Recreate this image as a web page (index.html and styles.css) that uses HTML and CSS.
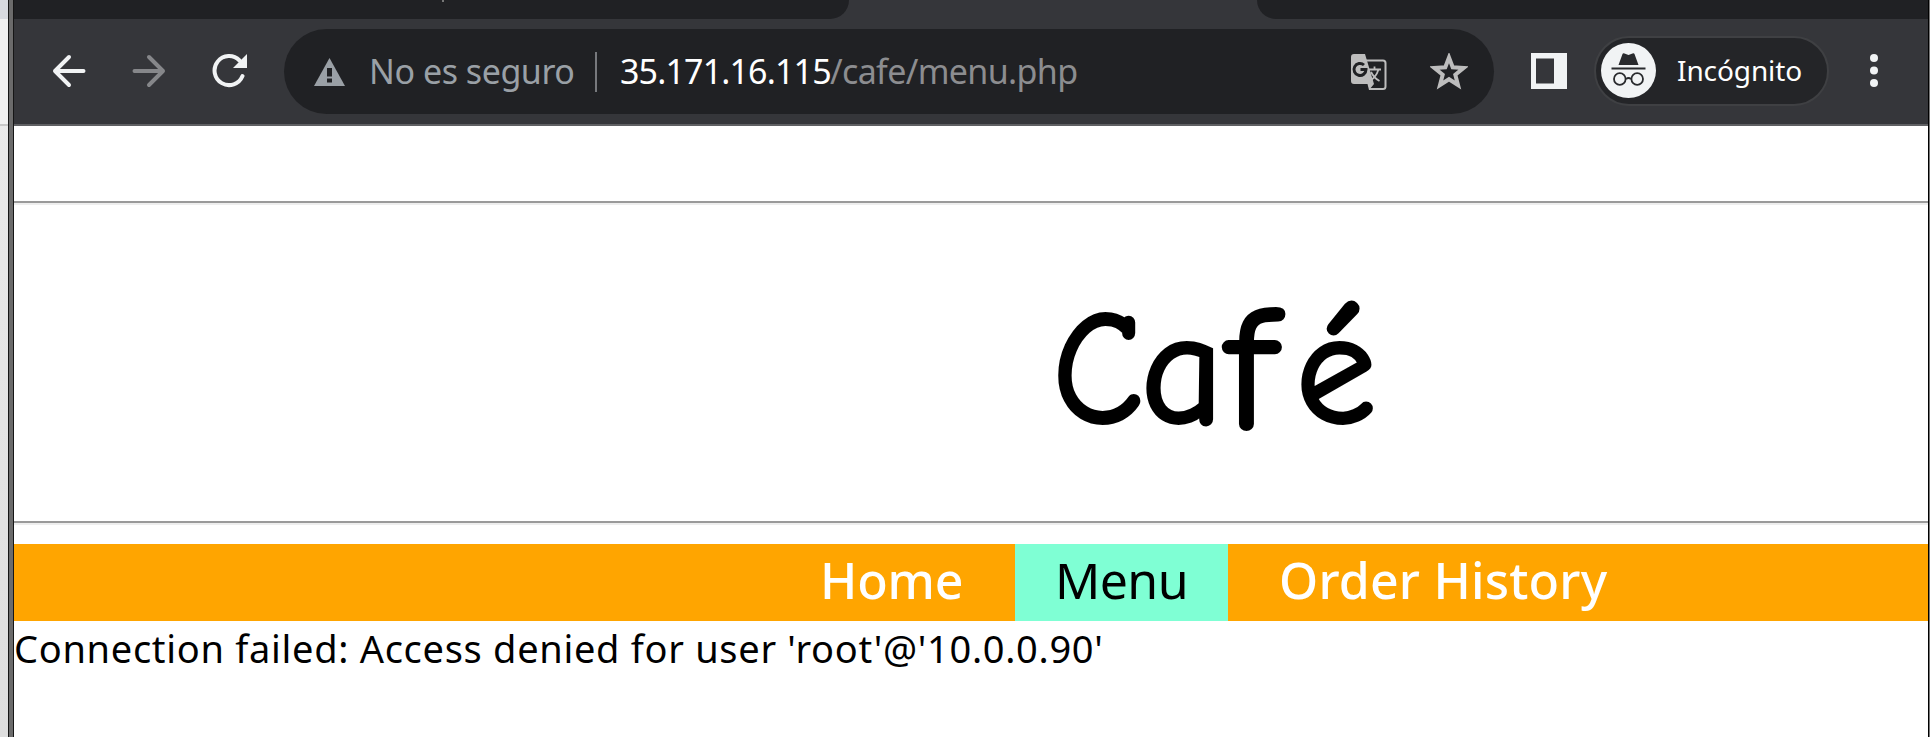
FILE: index.html
```html
<!DOCTYPE html>
<html lang="es">
<head>
<meta charset="utf-8">
<title>Café</title>
<link rel="stylesheet" href="styles.css">
</head>
<body>
<div class="screen">
  <aside class="behind"><div class="behind-top"></div><div class="behind-bar"></div></aside>
  <div class="edge"></div>
  <div class="window">
    <div class="tabs">
      <div class="tabs-left"><i class="tab-tick"></i></div>
      <div class="tabs-right"></div>
    </div>
    <header class="toolbar">
      <svg class="back" width="34" height="34" viewBox="0 0 34 34"><path d="M31.5 17H3M17 3L3 17L17 31"/></svg>
      <svg class="forward" width="34" height="34" viewBox="0 0 34 34"><path d="M2.500 17H31M17 3L31 17L17 31"/></svg>
      <svg class="reload" width="36" height="36" viewBox="0 0 36 36"><path class="arc" d="M30.500 23A14.500 14.500 0 1 1 27.500 7.500"/><path class="tip" d="M35 1V15H21Z"/></svg>
      <div class="address">
        <svg class="warn" width="31" height="28" viewBox="0 0 31 28"><path d="M15.500 0L31 28H0Z"/><path class="mark" d="M13 10h5v8.500h-5zM13 20.500h5v4h-5z"/></svg>
        <span class="insecure">No es seguro</span>
        <i class="divider"></i>
        <span class="host">35.171.16.115</span><span class="path">/cafe/menu.php</span>
        <svg class="translate" width="36" height="36" viewBox="0 0 36 36">
          <path class="outline" d="M15 6.500H32Q34.500 6.500 34.500 9V32.500Q34.500 35 32 35H18"/>
          <path class="fill" d="M3 0H14L23 30L18 36L16.500 30H3Q0 30 0 27V3Q0 0 3 0Z"/>
          <path class="g" d="M13 11A6 6 0 1 0 15 15.500H9.500"/>
          <path class="han" d="M18 15.500H30M23.500 12.500V15.500M27.500 15.500Q25 23.500 18.500 27M20 18Q23 24 28.500 27"/>
        </svg>
        <svg class="star" width="38" height="37" viewBox="0 0 38 37"><path d="M19 4.500L22.700 14.300L33.500 15L25.300 21.700L28 32L19 26.200L10 32L12.700 21.700L4.500 15L15.300 14.300Z"/></svg>
      </div>
      <svg class="panel" width="36" height="36" viewBox="0 0 36 36"><path fill-rule="evenodd" d="M0 0H36V36H0ZM5 5.500V30.500H23V5.500Z"/></svg>
      <div class="profile">
        <svg width="55" height="55" viewBox="0 0 55 55">
          <circle class="disc" cx="27.500" cy="27.500" r="27.500"/>
          <path class="hat" d="M17.500 22L21.500 11Q22 10 23.500 10.500L27.500 12L31.500 10.500Q33 10 33.500 11L37.500 22ZM10.500 24.500H44.500V26.500H10.500Z"/>
          <path class="specs" d="M25 36Q27.500 34 30 36"/><circle class="specs" cx="18.800" cy="36" r="5.800"/><circle class="specs" cx="36.200" cy="36" r="5.800"/>
        </svg>
        <span>Incógnito</span>
      </div>
      <svg class="more" width="8" height="34" viewBox="0 0 8 34"><circle cx="4" cy="4" r="4"/><circle cx="4" cy="16.500" r="4"/><circle cx="4" cy="29" r="4"/></svg>
    </header>
    <main>
      <div class="spacer"></div>
      <hr>
      <h1><span class="c">C</span><span class="a">a</span><span class="f">f</span><span class="e">é</span></h1>
      <hr>
      <nav><a class="home">Home</a><a class="current">Menu</a><a class="orders">Order History</a></nav>
      <p>Connection failed: Access denied for user 'root'@'10.0.0.90'</p>
    </main>
  </div>
  <div class="right-edge"></div>
</div>
</body>
</html>
```
FILE: styles.css
```css
* { box-sizing: border-box; }
body { margin: 0; background: #fff; font-family: "Noto Sans", "Open Sans", sans-serif; overflow: hidden; }
svg { display: block; flex: none; }
.screen { display: flex; width: 1930px; height: 737px; }
.behind { width: 8px; background: linear-gradient(#ececec, #dedede); }
.behind-top { height: 19px; background: #d8dadf; }
.behind-bar { height: 107px; background: #f1f1f1; border-bottom: 2px solid #c8c8c8; }
.edge { width: 6px; background: #6b6b6b; border: solid #161616; border-width: 0 1px; }
.window { width: 1914px; }
.right-edge { width: 2px; background: #777; border-left: 1px solid #000; }
.tabs { display: flex; justify-content: space-between; height: 19px; background: #35363a; }
.tabs-left { width: 835px; background: #202124; border-bottom-right-radius: 19px; }
.tab-tick { display: block; width: 2px; height: 2px; margin-left: 428px; background: #777; }
.tabs-right { width: 671px; background: #202124; border-bottom-left-radius: 19px; }
.toolbar { display: flex; align-items: center; height: 107px; padding: 0 50px 2px 38px; background: #35363a; border-bottom: 2px solid #5f6063; }
.back, .forward { fill: none; stroke: #f1f3f4; stroke-width: 4; stroke-linecap: round; stroke-linejoin: round; }
.forward { margin-left: 46px; stroke: #86878a; }
.reload { margin-left: 46px; }
.arc { fill: none; stroke: #f1f3f4; stroke-width: 4; stroke-linecap: round; }
.tip { fill: #f1f3f4; }
.address { display: flex; align-items: center; width: 1210px; height: 85px; margin: 2px 0 0 36px; padding: 0 26px 0 30px; border-radius: 43px; background: #202124; font-size: 34px; white-space: nowrap; }
.address span { padding-bottom: 2px; }
.warn { fill: #9aa0a6; }
.mark { fill: #202124; }
.insecure { width: 205px; margin-left: 24px; color: #9aa0a6; letter-spacing: -.45px; }
.divider { width: 2px; height: 40px; margin-left: 21px; background: #77797d; }
.host { width: 210px; margin-left: 23px; color: #fff; letter-spacing: -.85px; }
.path { width: 248px; color: #8c8d90; letter-spacing: -.65px; }
.translate { margin-left: auto; }
.fill { fill: #bdbdbd; }
.outline { fill: none; stroke: #bdbdbd; stroke-width: 2; }
.g { fill: none; stroke: #202124; stroke-width: 3; }
.han { fill: none; stroke: #bdbdbd; stroke-width: 1.8; }
.star { margin-left: 43px; fill: none; stroke: #bdbdbd; stroke-width: 4; }
.panel { margin-left: 37px; fill: #f1f3f4; }
.profile { display: flex; align-items: center; width: 235px; height: 70px; margin-left: 27px; padding-left: 5px; border: 2px solid #3f4043; border-radius: 35px; background: #242528; color: #fff; font-size: 28px; letter-spacing: -.1px; }
.profile span { margin-left: 21px; padding-bottom: 1px; }
.disc { fill: #f1f3f4; }
.hat { fill: #292a2d; }
.specs { fill: none; stroke: #292a2d; stroke-width: 1.8; }
.more { margin-left: auto; fill: #f1f3f4; }
.spacer { height: 75px; }
hr { height: 4px; margin: 0; border: 0; border-top: 2px solid #9a9a9a; background: #eee; }
h1 { display: flex; height: 316px; margin: 0; padding-left: 1039px; font: 400 160px/330px "Comic Sans MS", "Comic Neue", "Noto Sans", sans-serif; color: #000; -webkit-text-stroke: 4px #000; }
h1 span { display: block; height: 316px; }
.c { width: 88px; transform: scaleX(.92); transform-origin: left; }
.a { width: 85px; }
.f { width: 70px; font-size: 174px; line-height: 334px; }
.e { width: 86px; }
nav { display: flex; height: 77px; margin-top: 19px; background: orange; color: #fff; font-size: 50px; line-height: 73px; white-space: nowrap; }
nav a { display: block; }
.home { width: 1001px; padding-left: 806px; font-weight: 500; letter-spacing: -.2px; }
.current { width: 213px; padding-left: 40px; background: #7fffd4; color: #000; letter-spacing: -.6px; }
.orders { padding-left: 51px; font-weight: 500; letter-spacing: .2px; }
p { margin: 0; font-size: 38px; line-height: 54px; letter-spacing: .7px; color: #000; white-space: nowrap; }
```
